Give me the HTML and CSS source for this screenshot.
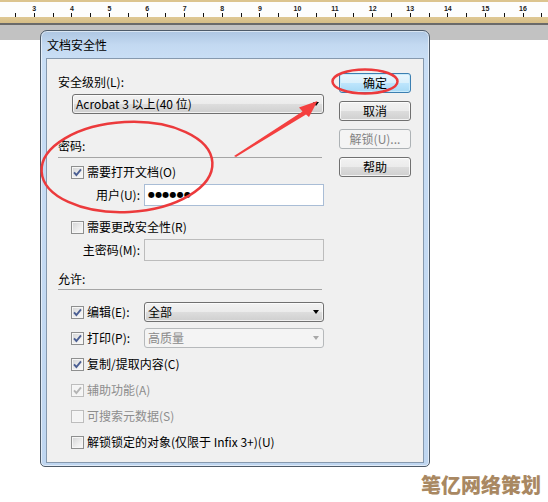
FILE: index.html
```html
<!DOCTYPE html>
<html>
<head>
<meta charset="utf-8">
<link rel="stylesheet" href="styles.css">
</head>
<body>
<div class="ruler">
  <div class="ruler-scale">
    <div class="ruler-labels"><span>3</span><span>4</span><span>5</span><span>6</span><span>7</span><span>8</span><span>9</span><span>10</span><span>11</span><span>12</span><span>13</span><span>14</span><span>15</span><span>16</span></div>
  </div>
  <div class="ruler-bottom"></div>
</div>
<div class="workspace">
  <div class="dialog">
    <div class="titlebar">文档安全性</div>
    <div class="client">
      <div class="main">
        <div class="label first">安全级别(L):</div>
        <div class="combo level"><span>Acrobat 3 以上(40 位)</span><i class="arrow"></i></div>
        <div class="label section">密码:</div>
        <div class="sep"></div>
        <div class="check-row r-open"><span class="cb"><svg viewBox="0 0 11 11"><path d="M2 5.3 L4.4 8 L9 2.4"/></svg></span><span>需要打开文档(O)</span></div>
        <div class="field-row r-user"><span class="field-label">用户(U):</span><div class="field active"><span class="dots">●●●●●●</span></div></div>
        <div class="check-row r-change"><span class="cb"></span><span>需要更改安全性(R)</span></div>
        <div class="field-row r-master"><span class="field-label">主密码(M):</span><div class="field disabled"></div></div>
        <div class="label allow">允许:</div>
        <div class="sep sep2"></div>
        <div class="opt-row r-edit">
          <div class="check-row wide"><span class="cb"><svg viewBox="0 0 11 11"><path d="M2 5.3 L4.4 8 L9 2.4"/></svg></span><span>编辑(E):</span></div>
          <div class="combo grow"><span>全部</span><i class="arrow"></i></div>
        </div>
        <div class="opt-row r-print">
          <div class="check-row wide"><span class="cb"><svg viewBox="0 0 11 11"><path d="M2 5.3 L4.4 8 L9 2.4"/></svg></span><span>打印(P):</span></div>
          <div class="combo grow off"><span>高质量</span><i class="arrow"></i></div>
        </div>
        <div class="check-row r-list"><span class="cb"><svg viewBox="0 0 11 11"><path d="M2 5.3 L4.4 8 L9 2.4"/></svg></span><span>复制/提取内容(C)</span></div>
        <div class="check-row r-list off"><span class="cb"><svg viewBox="0 0 11 11"><path d="M2 5.3 L4.4 8 L9 2.4"/></svg></span><span>辅助功能(A)</span></div>
        <div class="check-row r-list off"><span class="cb"></span><span>可搜索元数据(S)</span></div>
        <div class="check-row r-list"><span class="cb"></span><span>解锁锁定的对象(仅限于 Infix 3+)(U)</span></div>
      </div>
      <div class="buttons">
        <div class="btn default">确定</div>
        <div class="btn">取消</div>
        <div class="btn off">解锁(U)...</div>
        <div class="btn">帮助</div>
      </div>
    </div>
  </div>
</div>
<svg class="annot" width="548" height="502" viewBox="0 0 548 502">
  <ellipse cx="365" cy="81.5" rx="32.5" ry="12" fill="none" stroke="#ec3a3c" stroke-width="2.5"/>
  <ellipse cx="127" cy="167" rx="85.5" ry="45" fill="none" stroke="#ec3a3c" stroke-width="2.5" transform="rotate(-3 127 167)"/>
  <polygon points="234,156 302.5,111.5 299,107.5 317.5,101 309,117 306,114.5 236,157" fill="#f43f3f"/>
</svg>
<div class="watermark">笔亿网络策划</div>
</body>
</html>
```
FILE: styles.css
```css
html, body {
  margin: 0;
  padding: 0;
}
body {
  width: 548px;
  height: 502px;
  position: relative;
  overflow: hidden;
  background: #fff;
  font-family: "Noto Sans CJK SC", "Liberation Sans", sans-serif;
  font-size: 12px;
  color: #000;
}
.ruler {
  height: 25px;
  box-sizing: border-box;
  border-top: 2px solid #dcc48f;
}
.ruler-scale {
  height: 15px;
  background:
    repeating-linear-gradient(to right, transparent 0 15px, #111 15px 16px, transparent 16px 18.8px) left bottom / 100% 4px no-repeat,
    #fdfdfd;
}
.ruler-labels {
  display: flex;
  padding-left: 15.5px;
  padding-top: 3px;
  font-family: "Liberation Sans", sans-serif;
  font-size: 7px;
  line-height: 7px;
  font-weight: 700;
  color: #222;
}
.ruler-labels span {
  width: 37.6px;
  flex: none;
  text-align: center;
}
.ruler-bottom {
  height: 8px;
  box-sizing: border-box;
  background: linear-gradient(#dfc894, #d6bd86);
  border-bottom: 2px solid #6a6a6a;
}
.workspace {
  height: 477px;
  background: linear-gradient(#c2c2c2 0 15px, #fff 15px);
  padding-top: 5px;
  box-sizing: border-box;
}
.dialog {
  margin-left: 40px;
  width: 390px;
  height: 437px;
  box-sizing: border-box;
  border: 1px solid #4e5b69;
  border-radius: 7px 7px 5px 5px;
  padding: 0 5px 3px;
  background: linear-gradient(180deg, #adc6e2 0px, #c3d9f1 14px, #c9def5 28px, #bfd6f0 100%);
  box-shadow: inset 0 0 0 1px rgba(255,255,255,0.55);
  display: flex;
  flex-direction: column;
}
.titlebar {
  height: 27px;
  line-height: 27px;
  padding-left: 1px;
  flex: none;
}
.client {
  flex: 1;
  border: 1px solid #8699ae;
  background: #f0f0f0;
  display: flex;
  gap: 15px;
  padding: 0 12px 0 11px;
}
.main {
  width: 266px;
  flex: none;
  display: flex;
  flex-direction: column;
}
.label {
  height: 16px;
  line-height: 16px;
}
.first { margin-top: 15px; }
.section { margin-top: 24px; }
.allow { margin-top: 10px; }
.sep {
  border-top: 1px solid #a5a5a5;
  margin: 3px 2px 0 0;
}
.sep2 { margin-top: 2px; }
.combo {
  height: 20px;
  box-sizing: border-box;
  border: 1px solid #707070;
  border-radius: 3px;
  background: linear-gradient(#f2f2f2 0%, #ebebeb 50%, #dddddd 50%, #cfcfcf 100%);
  box-shadow: inset 0 0 0 1px rgba(255,255,255,0.7);
  display: flex;
  align-items: center;
  justify-content: space-between;
  padding: 0 3px 0 3px;
  line-height: 16px;
}
.combo.level {
  margin: 4px 0 0 14px;
}
.arrow {
  width: 0;
  height: 0;
  border-left: 3.5px solid transparent;
  border-right: 3.5px solid transparent;
  border-top: 4px solid #000;
  margin-right: 1px;
}
.combo.off {
  border-color: #b6b9bb;
  background: #f4f4f4;
  box-shadow: none;
  color: #8a8a8a;
}
.combo.off .arrow { border-top-color: #a8a8a8; }
.check-row {
  height: 16px;
  line-height: 16px;
  display: flex;
  align-items: center;
  gap: 3px;
  margin-left: 13px;
}
.cb {
  width: 13px;
  height: 13px;
  box-sizing: border-box;
  flex: none;
  border: 1px solid #8e8f8f;
  background: linear-gradient(135deg, #d2d3d4 0%, #eeeeee 60%, #fbfbfb 100%);
  box-shadow: inset 0 0 0 1px #f6f6f6;
  display: flex;
}
.cb svg {
  width: 11px;
  height: 11px;
}
.cb path {
  fill: none;
  stroke: #4b5f93;
  stroke-width: 1.9;
}
.check-row.off { color: #8d8d8d; }
.check-row.off .cb {
  border-color: #bdbdbd;
  background: #f4f4f4;
}
.check-row.off .cb path { stroke: #b4b4b4; }
.r-open { margin-top: 6px; }
.r-change { margin-top: 13px; }
.r-list { margin-top: 10px; }
.field-row {
  display: flex;
  align-items: center;
  gap: 4px;
  height: 22px;
}
.r-user { margin-top: 4px; }
.r-master { margin-top: 4px; }
.field-label {
  width: 82px;
  text-align: right;
  flex: none;
  line-height: 16px;
}
.field {
  flex: 1;
  height: 22px;
  box-sizing: border-box;
  border: 1px solid #a9bdd6;
  background: #fff;
  display: flex;
  align-items: center;
  padding-left: 3px;
}
.field.disabled {
  border-color: #bcbcbc;
  background: #f0f0f0;
}
.dots {
  font-family: "DejaVu Sans", sans-serif;
  font-size: 8px;
  letter-spacing: 0.2px;
  line-height: 10px;
}
.opt-row {
  display: flex;
  align-items: center;
  height: 20px;
}
.r-edit { margin-top: 12px; }
.r-print { margin-top: 6px; }
.check-row.wide {
  width: 73px;
  flex: none;
}
.combo.grow { flex: 1; }
.main .r-print + .r-list { margin-top: 8px; }
.buttons {
  width: 72px;
  flex: none;
  display: flex;
  flex-direction: column;
  gap: 8px;
  padding-top: 14px;
}
.btn {
  height: 20px;
  box-sizing: border-box;
  border: 1px solid #707070;
  border-radius: 3px;
  background: linear-gradient(#f2f2f2 0%, #ebebeb 50%, #dddddd 50%, #cfcfcf 100%);
  box-shadow: inset 0 0 0 1px rgba(255,255,255,0.75);
  display: flex;
  align-items: center;
  justify-content: center;
  line-height: 16px;
}
.btn.default {
  border-color: #3c7fb1;
  background: linear-gradient(#eaf6fd 0%, #d9f0fc 50%, #bee6fd 50%, #a7d9f5 100%);
  box-shadow: inset 0 0 0 1px #c9ebfb;
}
.btn.off {
  border-color: #adb2b5;
  background: #f4f4f4;
  box-shadow: none;
  color: #838383;
}
.annot {
  position: absolute;
  left: 0;
  top: 0;
  pointer-events: none;
}
.watermark {
  position: absolute;
  right: 7px;
  top: 472px;
  font-size: 20px;
  line-height: 26px;
  font-weight: 900;
  color: #a98862;
}
```
